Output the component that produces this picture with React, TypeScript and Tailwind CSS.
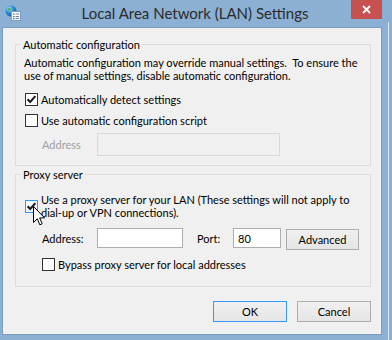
import React from "react";

function CheckBox({ checked = false, focus = false }: { checked?: boolean; focus?: boolean }) {
  return (
    <div
      className={
        "w-[13px] h-[13px] shrink-0 border flex items-center justify-center " +
        (focus ? "border-[#3399ff] bg-[#f3f9ff]" : "border-[#333333] bg-white")
      }
    >
      {checked && (
        <svg width="11" height="11" viewBox="0 0 11 11">
          <path d="M1.6 5.2 L4.2 8 L9.4 2.2" fill="none" stroke="#1a1a1a" strokeWidth="2" />
        </svg>
      )}
    </div>
  );
}

function Button({ children, def = false, className = "" }: { children: React.ReactNode; def?: boolean; className?: string }) {
  return (
    <div
      className={
        "h-[21px] flex items-center justify-center border bg-gradient-to-b from-[#f0f0f0] to-[#e5e5e5] text-black " +
        (def ? "border-[#3399ff] " : "border-[#acacac] ") +
        className
      }
    >
      {children}
    </div>
  );
}

export default function App() {
  return (
    <div className="w-[392px] h-[340px] bg-[#8cb0d3] overflow-hidden flex font-['Lato',sans-serif] text-[11px] leading-[13px] text-black whitespace-nowrap">
      <div className="w-[388px] h-[340px] flex flex-col">
        {/* title bar */}
        <div className="h-[27px] relative flex items-start justify-center">
          <svg className="absolute left-[5px] top-[5px]" width="16" height="16" viewBox="0 0 16 16">
            <defs>
              <radialGradient id="g" cx="35%" cy="30%" r="70%">
                <stop offset="0%" stopColor="#9fe0ff" />
                <stop offset="55%" stopColor="#2b8ad6" />
                <stop offset="100%" stopColor="#1a5ea8" />
              </radialGradient>
            </defs>
            <circle cx="6" cy="6" r="5.5" fill="url(#g)" />
            <path d="M3 3.5 Q5 2.5 6 4 Q5 6 3 5.5 Z M7 7 Q9 6.5 10 8 Q8 10 7 9 Z" fill="#4caf3a" />
            <rect x="6.5" y="6.5" width="9" height="9" fill="#ffffff" stroke="#7a9ac0" />
            <rect x="8" y="8.5" width="1.5" height="1.2" fill="#2a6cc0" />
            <rect x="10.5" y="8.5" width="3.5" height="1" fill="#5a7fb0" />
            <rect x="8" y="11" width="1.5" height="1.2" fill="#2a6cc0" />
            <rect x="10.5" y="11" width="3.5" height="1" fill="#5a7fb0" />
            <rect x="8" y="13" width="1.5" height="1.2" fill="#2a6cc0" />
            <rect x="10.5" y="13" width="3.5" height="1" fill="#5a7fb0" />
          </svg>
          <div className="mt-[3px] text-[15px] leading-[20px] text-[#2b2b2b] pl-[2px]">Local Area Network (LAN) Settings</div>
          <div className="absolute left-[351px] top-0 w-[31px] h-[19px] bg-[#c75050] flex items-center justify-center">
            <svg width="9" height="9" viewBox="0 0 9 9">
              <path d="M1 1 L8 8 M8 1 L1 8" stroke="#ffffff" strokeWidth="1.8" />
            </svg>
          </div>
        </div>
        {/* client area */}
        <div className="ml-[2px] w-[380px] h-[308px] border border-[#7e9dbc] bg-[#f0f0f0]">
          <div className="pl-[12px] pt-[16px] flex flex-col">
            {/* Automatic configuration */}
            <div className="relative w-[356px] h-[122px] border border-[#dcdcdc] pl-[8px] pt-[11px]">
              <span className="absolute left-[5px] -top-[7px] px-[2px] bg-[#f0f0f0]">Automatic configuration</span>
              <div>
                Automatic configuration may override manual settings.&nbsp; To ensure the
                <br />
                use of manual settings, disable automatic configuration.
              </div>
              <div className="mt-[11px] ml-[1px] flex items-center gap-[3px]">
                <CheckBox checked />
                <span>Automatically detect settings</span>
              </div>
              <div className="mt-[8px] ml-[1px] flex items-center gap-[3px]">
                <CheckBox />
                <span>Use automatic configuration script</span>
              </div>
              <div className="mt-[6px] ml-[18px] flex items-center">
                <span className="w-[55px] text-[#a0a0a0]">Address</span>
                <div className="w-[183px] h-[23px] border border-[#d9d9d9] bg-[#f0f0f0]" />
              </div>
            </div>
            {/* Proxy server */}
            <div className="relative mt-[8px] w-[356px] h-[113px] border border-[#dcdcdc] pl-[8px] pt-[18px]">
              <span className="absolute left-[5px] -top-[7px] px-[2px] bg-[#f0f0f0]">Proxy server</span>
              <div className="ml-[1px] flex items-center gap-[3px]">
                <CheckBox checked focus />
                <span>
                  Use a proxy server for your LAN (These settings will not apply to
                  <br />
                  dial-up or VPN connections).
                </span>
              </div>
              <div className="mt-[9px] ml-[18px] flex items-start">
                <span className="w-[55px] h-[20px] flex items-center">Address:</span>
                <div className="w-[86px] h-[20px] border border-[#abadb3] bg-white" />
                <span className="ml-[14px] w-[36px] h-[20px] flex items-center">Port:</span>
                <div className="w-[48px] h-[20px] border border-[#abadb3] bg-white pl-[4px] flex items-center">80</div>
                <Button className="ml-[5px] mt-[1px] w-[73px]">Advanced</Button>
              </div>
              <div className="mt-[8px] ml-[18px] flex items-center gap-[3px]">
                <CheckBox />
                <span>Bypass proxy server for local addresses</span>
              </div>
            </div>
            {/* buttons */}
            <div className="mt-[14px] w-[356px] flex justify-end gap-[10px]">
              <Button def className="w-[74px]">OK</Button>
              <Button className="w-[74px]">Cancel</Button>
            </div>
          </div>
        </div>
      </div>
      <div className="w-px mt-[22px] bg-[#dfe5ec]" />
      {/* mouse cursor */}
      <svg className="absolute left-[33px] top-[206px]" width="13" height="21" viewBox="0 0 13 21">
        <path d="M0.5 0.5 L0.5 16.5 L4.3 12.8 L6.8 18.8 L9.2 17.8 L6.7 11.9 L11.6 11.9 Z" fill="#ffffff" stroke="#000000" strokeWidth="1" strokeLinejoin="miter" />
      </svg>
    </div>
  );
}
